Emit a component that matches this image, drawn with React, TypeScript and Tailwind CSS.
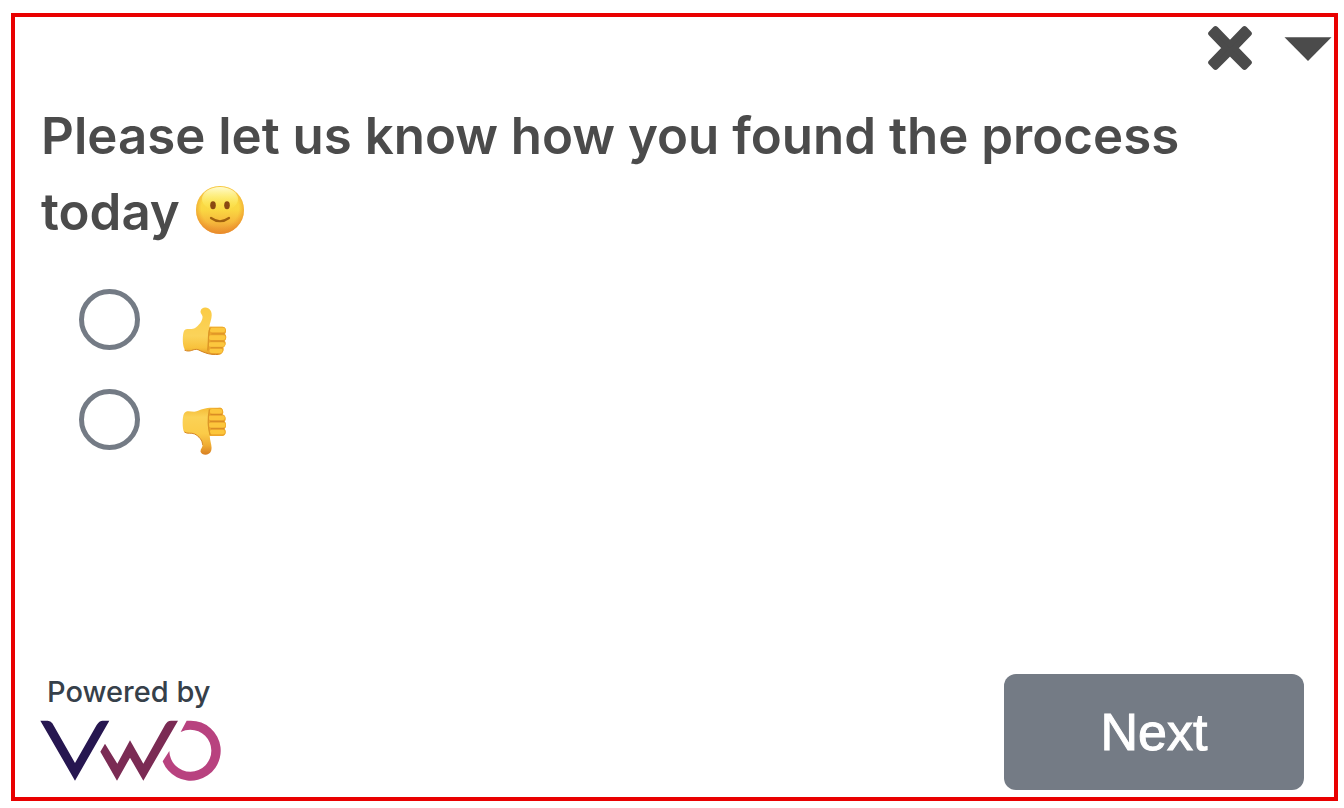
import { useState } from "react";

function CloseIcon() {
  return (
    <svg viewBox="0 0 44 44" className="size-11" aria-hidden="true">
      <path
        fill="#4b4b4b"
        stroke="#4b4b4b"
        strokeWidth="6"
        strokeLinejoin="round"
        d="M7.5 3.2 22 18 36.5 3.2 40.8 7.5 26.8 22 40.8 36.5 36.5 40.8 22 26.3 7.5 40.8 3.2 36.5 17.2 22 3.2 7.5Z"
      />
    </svg>
  );
}

function CaretIcon() {
  return (
    <svg viewBox="0 0 48 24" className="h-6 w-12" fill="#4b4b4b" aria-hidden="true">
      <path d="M0.5 0.3H47.5L24 24Z" />
    </svg>
  );
}

function Smile() {
  return (
    <svg viewBox="0 0 48 48" className="ml-[3px] inline-block size-12 align-[-4px]" role="img" aria-label="slightly smiling face">
      <defs>
        <linearGradient id="face" x1="0" y1="0" x2="0" y2="1">
          <stop offset="0" stopColor="#fbe04a" />
          <stop offset="0.5" stopColor="#fad742" />
          <stop offset="0.75" stopColor="#f6b93c" />
          <stop offset="1" stopColor="#e88c30" />
        </linearGradient>
        <radialGradient id="rim" cx="0.5" cy="0.46" r="0.54">
          <stop offset="0.72" stopColor="#f0982d" stopOpacity="0" />
          <stop offset="1" stopColor="#e98a28" stopOpacity="0.75" />
        </radialGradient>
        <linearGradient id="shine" x1="0" y1="0" x2="0" y2="1">
          <stop offset="0" stopColor="#fffbd0" />
          <stop offset="1" stopColor="#fff34f" stopOpacity="0" />
        </linearGradient>
      </defs>
      <circle cx="24" cy="24" r="24" fill="url(#face)" />
      <circle cx="24" cy="24" r="24" fill="url(#rim)" />
      <ellipse cx="24" cy="13" rx="18" ry="12" fill="url(#shine)" />
      <ellipse cx="17" cy="19.3" rx="2.8" ry="4" fill="#8a4a12" />
      <ellipse cx="31" cy="19.3" rx="2.8" ry="4" fill="#8a4a12" />
      <path d="M15 32Q24 38.5 33 32" fill="none" stroke="#a0600f" strokeWidth="2.2" strokeLinecap="round" />
    </svg>
  );
}

function ThumbUp() {
  return (
    <svg viewBox="365 82 134 146" className="h-12 w-[45px]" role="img" aria-label="thumbs up">
      <defs>
        <linearGradient id="upHand" x1="0" y1="0" x2="0" y2="1">
          <stop offset="0" stopColor="#fbcb45" />
          <stop offset="0.6" stopColor="#fbd35a" />
          <stop offset="0.85" stopColor="#f8c23c" />
          <stop offset="1" stopColor="#e39a28" />
        </linearGradient>
      </defs>
      <path
        fill="url(#upHand)"
        d="M420 95C422 80 446 80 452 96C458 112 448 128 447 142L486 142C499 142 500 158 494 164C500 169 499 181 493 185C499 191 496 202 489 205C492 214 487 226 474 227C450 229 430 221 413 213C400 207 390 221 375 214C364 209 364 165 370 154C377 144 392 152 402 147C415 138 427 124 426 111C425 104 419 102 420 95Z"
      />
      <path d="M448 142C441 160 445 190 440 216L474 227C487 226 492 214 489 205C496 202 499 191 493 185C499 181 500 169 494 164C500 158 499 142 486 142Z" fill="#eda62c" />
      <g stroke="#fcc73e" strokeWidth="14" strokeLinecap="round">
        <path d="M455 152H488M451 175H489M451 196H487M454 215H480" />
      </g>
      <path d="M449 146C441 165 446 189 442 214" fill="none" stroke="#dc9626" strokeWidth="4" />
      <path d="M453 164H493M450 186H492M451 206H487" stroke="#dd9427" strokeWidth="4" />
      <path d="M371 213C390 222 397 207 413 212C433 222 452 229 474 226" fill="none" stroke="#d38322" strokeWidth="3" />
    </svg>
  );
}

function ThumbDown() {
  return (
    <svg viewBox="365 382 134 146" className="h-12 w-[45px]" role="img" aria-label="thumbs down">
      <defs>
        <linearGradient id="downHand" x1="0" y1="0" x2="0" y2="1">
          <stop offset="0" stopColor="#f4bb36" />
          <stop offset="0.2" stopColor="#fbd256" />
          <stop offset="0.55" stopColor="#fbcb48" />
          <stop offset="0.8" stopColor="#efac34" />
          <stop offset="1" stopColor="#d87f22" />
        </linearGradient>
      </defs>
      <path
        fill="url(#downHand)"
        d="M370 402C376 389 394 398 405 396C420 390 434 384 456 384H480C489 385 491 400 487 405C498 407 498 423 493 426C500 432 498 445 493 448C500 457 496 470 486 470H448C448 486 457 501 452 516C446 531 424 530 420 518C419 509 427 506 426 497C426 483 415 471 402 464C391 459 380 465 370 458C364 449 364 411 370 402Z"
      />
      <path d="M447 387C443 416 443 447 449 470H486C496 470 500 457 493 448C498 445 500 432 493 426C498 423 498 407 487 405C491 400 489 385 480 384Z" fill="#eda62c" />
      <g stroke="#fcc63c" strokeWidth="14" strokeLinecap="round">
        <path d="M455 395H479M451 415H487M451 437H489M455 458H487" />
      </g>
      <path d="M447 389C442 415 443 446 449 467" fill="none" stroke="#dc9626" strokeWidth="4" />
      <path d="M450 405H486M449 426H492M451 448H492" stroke="#d98d25" strokeWidth="4" />
      <path d="M371 458C380 465 391 459 402 464C415 471 426 483 426 497" fill="none" stroke="#d38322" strokeWidth="3" />
    </svg>
  );
}

function VwoLogo() {
  return (
    <svg viewBox="120 180 543 183" className="h-[61px] w-[181px]" role="img" aria-label="VWO">
      <path fill="#261650" d="M121 182H143Q152 182 157 190L225 309 290 195Q298 182 308 182H328L225 362Z" />
      <path fill="#7b2b54" d="M315 251 352 311 390 241 430 311 495 195Q502 182 513 182H534L430 362 390 293 351 362 301 275Z" />
      <path fill="#b8427f" d="M560 182H572A90 90 0 1 1 488 304L508 273A63 63 0 1 0 571 209Q556 209 542 216Z" />
    </svg>
  );
}

const options = [
  { value: "up", icon: <ThumbUp /> },
  { value: "down", icon: <ThumbDown /> },
];

export default function App() {
  const [answer, setAnswer] = useState("");

  return (
    <div className="flex min-h-screen bg-white pt-[13px] pr-[6px] pb-[7px] pl-[11px] font-['Inter',sans-serif] text-[#4b4b4b]">
      <form className="flex flex-1 flex-col border-4 border-[#e90000]" onSubmit={(e) => e.preventDefault()}>
        <header className="flex h-[81px] items-start justify-end gap-8 pt-[9px] pr-[2px]">
          <button type="button" aria-label="Close">
            <CloseIcon />
          </button>
          <button type="button" aria-label="Minimize" className="flex h-[46px] items-center">
            <CaretIcon />
          </button>
        </header>

        <fieldset className="flex-1">
          <legend className="px-[26px] text-[51px] leading-[76px] font-semibold">
            Please let us know how you found the process today <Smile />
          </legend>
          <div className="flex flex-col gap-10 px-16 pt-[39px]">
            {options.map((o) => (
              <label key={o.value} className="flex h-15 items-start gap-[42px]">
                <input
                  type="radio"
                  name="answer"
                  value={o.value}
                  checked={answer === o.value}
                  onChange={() => setAnswer(o.value)}
                  className="size-[61px] shrink-0 appearance-none rounded-full border-[5px] border-[#747b85] checked:bg-[#747b85]"
                />
                <span className="pt-[18px]">{o.icon}</span>
              </label>
            ))}
          </div>
        </fieldset>

        <footer className="flex items-end justify-between pr-[30px] pb-[7px] pl-[25px]">
          <div className="flex flex-col gap-[10px] pb-[9px]">
            <span className="pl-[7px] text-[29px] leading-9 font-medium text-[#36404a]">Powered by</span>
            <VwoLogo />
          </div>
          <button
            type="submit"
            className="h-29 w-[300px] rounded-xl bg-[#747b85] font-['Liberation_Sans',sans-serif] text-[52px] text-white [-webkit-text-stroke:1px_white]"
          >
            Next
          </button>
        </footer>
      </form>
    </div>
  );
}
